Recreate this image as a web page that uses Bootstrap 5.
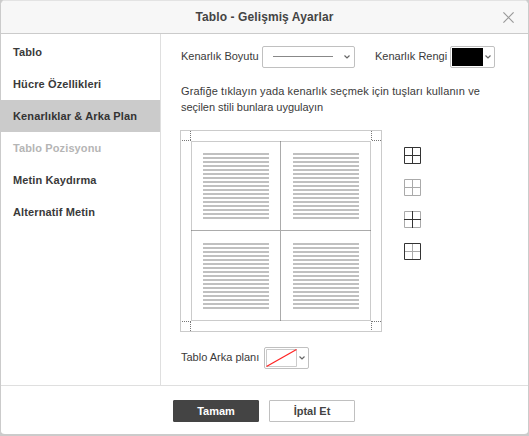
<!DOCTYPE html>
<html lang="tr">
<head>
<meta charset="utf-8">
<title>Tablo - Gelişmiş Ayarlar</title>
<link rel="stylesheet" href="https://cdn.jsdelivr.net/npm/bootstrap@5.3.0/dist/css/bootstrap.min.css">
<style>
body{font:11px/16px "Liberation Sans",Arial,sans-serif;color:#3a3a3a;background:#cbcbcb;overflow:hidden}
svg{display:block;flex:none}
.dlg{width:529px;height:436px;border:1px solid #cbcbcb;border-top-color:#e3e3e3;border-bottom-width:2px;border-radius:5px;background:#fff;overflow:hidden}
.dlg-head{height:33px;background:#f7f7f7;border-bottom:1px solid #cbcbcb}
.dlg-title{font-size:12px;letter-spacing:.1px;line-height:33px;color:#444}
.dlg-close{width:11px;height:11px;margin:11px 14px 0 -25px}
.dlg-main{height:352px;border-bottom:1px solid #dfdfdf}
.side{width:160px;border-right:1px solid #dfdfdf;padding-top:2px}
.side .item{height:32px;line-height:32px;padding-left:12px;font-weight:700;letter-spacing:.12px;white-space:nowrap}
.side .item.on{background:#cbcbcb;color:#333}
.side .item.off{color:#b5b5b5}
.pane{padding:12px 0 0 20px}
.line{height:22px;white-space:nowrap}
.lbl{line-height:21px}
.combo{height:22px;border:1px solid #c0c0c0;border-radius:2px;background:#fff}
.hint{margin-top:15px;white-space:nowrap;letter-spacing:-.03px}
.hint-first{letter-spacing:.12px}
.foot-btn{width:86px;height:22px;line-height:20px;border:1px solid #c0c0c0;font-size:11px;font-weight:700;padding:0;border-radius:1px;color:#444;background:#fff}
.foot-btn.ok{background:#444;border-color:#444;color:#fff}
</style>
<script src="https://cdn.jsdelivr.net/npm/bootstrap@5.3.0/dist/js/bootstrap.bundle.min.js"></script>
</head>
<body>
<div class="dlg d-flex flex-column">
  <header class="dlg-head d-flex">
    <div class="dlg-title flex-fill text-center fw-bold">Tablo - Gelişmiş Ayarlar</div>
    <svg class="dlg-close" viewBox="0 0 11 11" stroke="#999" stroke-width="1.2"><path d="M.4.4 10.6 10.6M10.6.4.4 10.6"/></svg>
  </header>
  <main class="dlg-main d-flex">
    <nav class="side flex-shrink-0">
      <div class="item">Tablo</div>
      <div class="item">Hücre Özellikleri</div>
      <div class="item on">Kenarlıklar &amp; Arka Plan</div>
      <div class="item off">Tablo Pozisyonu</div>
      <div class="item">Metin Kaydırma</div>
      <div class="item">Alternatif Metin</div>
    </nav>
    <section class="pane flex-fill">
      <div class="line d-flex">
        <span class="lbl" style="width:81px">Kenarlık Boyutu</span>
        <div class="combo" style="width:93px"><svg width="91" height="20" fill="none"><path d="M10 9.5h60" stroke="#888"/><path d="M81.5 8.5 84 11l2.500-2.500" stroke="#666" stroke-width="1.200"/></svg></div>
        <span class="lbl ps-1" style="width:95px"><span class="d-block ms-3">Kenarlık Rengi</span></span>
        <div class="combo" style="width:45px"><svg width="43" height="20" fill="none"><path d="M1 1h31v18H1z" fill="#000"/><path d="M34.500 8.500 37 11l2.500-2.500" stroke="#666" stroke-width="1.200"/></svg></div>
      </div>
      <div class="hint"><span class="hint-first">Grafiğe tıklayın yada kenarlık seçmek için tuşları kullanın ve</span><br>seçilen stili bunlara uygulayın</div>
      <div class="d-flex" style="margin:15px 0 0 -1px">
        <svg width="202" height="202" fill="none" shape-rendering="crispEdges">
          <defs><pattern id="rows" width="4" height="4" patternUnits="userSpaceOnUse"><path d="M0 0h4v2H0z" fill="#c0c0c0"/></pattern></defs>
          <path d="M.5.5h201v201H.5zM11.500 11.500h179v179h-179z" stroke="#cbcbcb"/>
          <path d="M100.500 11v180M11 100.500h180" stroke="#666" stroke-opacity=".55"/>
          <path d="M2 10.500h9M10.500 1v10M192 10.500h9M191.500 1v10M2 191.500h9M10.500 192v9M192 191.500h9M191.500 191v10" stroke="#777" stroke-dasharray="1 1"/>
          <g fill="url(#rows)">
            <path d="M0 0h66v66H0z" transform="translate(23 23)"/><path d="M0 0h66v66H0z" transform="translate(113 23)"/>
            <path d="M0 0h66v66H0z" transform="translate(23 113)"/><path d="M0 0h66v66H0z" transform="translate(113 113)"/>
          </g>
        </svg>
        <div class="d-flex flex-column" style="gap:15px;margin:17px 0 0 22px">
          <svg width="17" height="17" fill="none" stroke="#333"><path d="M.5.5h16v16H.5zM8.500 1v15M1 8.500h15"/></svg>
          <svg width="17" height="17" fill="none" stroke="#aaa"><path d="M.5.5h16v16H.5zM8.500 1v15M1 8.500h15"/></svg>
          <svg width="17" height="17" fill="none" stroke="#333"><path d="M.5.5h16v16H.5z" stroke="#aaa"/><path d="M8.500 0v17M0 8.500h17"/></svg>
          <svg width="17" height="17" fill="none" stroke="#333"><path d="M8.500 1v15M1 8.500h15" stroke="#aaa"/><path d="M.5.5h16v16H.5z"/></svg>
        </div>
      </div>
      <div class="line d-flex" style="margin-top:15px">
        <span class="lbl" style="width:83px">Tablo Arka planı</span>
        <div class="combo" style="width:45px"><svg width="43" height="20" fill="none"><path d="M1.500 1.500h30v17h-30z" stroke="#cbcbcb"/><path d="M1.500 18.500l30-17" stroke="#f22" stroke-width="1.200"/><path d="M34.500 8.500 37 11l2.500-2.500" stroke="#666" stroke-width="1.200"/></svg></div>
      </div>
    </section>
  </main>
  <footer class="d-flex justify-content-center" style="gap:10px;padding:14px 1px 0 0">
    <button class="foot-btn ok">Tamam</button>
    <button class="foot-btn">İptal Et</button>
  </footer>
</div>
</body>
</html>
